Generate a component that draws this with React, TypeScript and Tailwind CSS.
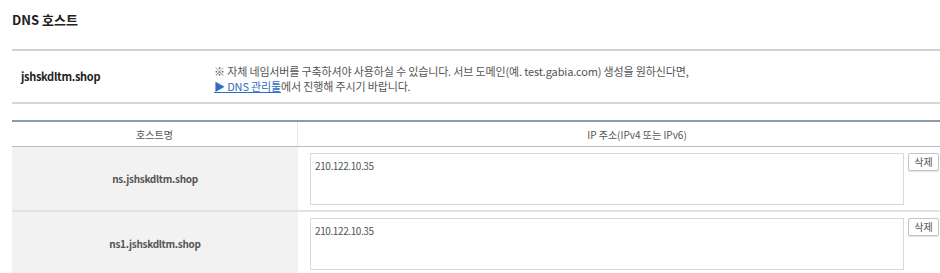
import React from "react";

const font = { fontFamily: '"Noto Sans CJK KR", "Noto Sans", sans-serif' };

function Row({ host, ip }: { host: string; ip: string }) {
  return (
    <div className="flex border-b-2 border-[#e3e3e3]">
      <div className="w-[286px] shrink-0 bg-[#f2f2f2] flex items-center justify-center text-[10px] tracking-[-0.3px] font-semibold text-[#555] h-[63px]">
        {host}
      </div>
      <div className="flex-1 flex items-start pl-[12px] pt-[6px] bg-white">
        <div className="w-[594px] h-[52px] border border-[#d9d9d9] bg-white px-[4px] pt-[4px] text-[10px] tracking-[-0.4px] leading-[16px] text-[#555]">
          {ip}
        </div>
        <button className="ml-[4px] w-[31px] h-[18px] border border-[#c4c4c4] rounded-[2px] bg-white text-[10px] leading-[14px] text-[#555] shadow-[0_1px_1px_rgba(0,0,0,0.12)]">
          삭제
        </button>
      </div>
    </div>
  );
}

export default function App() {
  return (
    <div className="w-[940px] h-[273px] overflow-hidden bg-white pl-[12px]" style={font}>
      <div className="h-[49px] pt-[11px] text-[13px] leading-[18px] font-bold text-[#222]">DNS 호스트</div>
      <div className="h-[2px] bg-[#ced2d7]" />
      <div className="flex items-center h-[51px]">
        <div className="w-[202px] pl-[9px] text-[11px] tracking-[-0.3px] font-bold text-[#222]">jshskdltm.shop</div>
        <div className="text-[11px] tracking-[-0.15px] leading-[15px] text-[#555] pt-[4px]">
          <div>※ 자체 네임서버를 구축하셔야 사용하실 수 있습니다. 서브 도메인(예. test.gabia.com) 생성을 원하신다면,</div>
          <div>
            <span className="text-[#2d6cc9] underline">▶ DNS 관리툴</span>에서 진행해 주시기 바랍니다.
          </div>
        </div>
      </div>
      <div className="h-[2px] bg-[#d3d7db]" />
      <div className="h-[16px]" />
      <div className="h-[2px] bg-[#8d9aa8]" />
      <div className="flex h-[25px] border-b border-[#b3bcc6] text-[10px] text-[#555]">
        <div className="w-[286px] shrink-0 flex items-center justify-center border-r border-[#e6e6e6]">호스트명</div>
        <div className="flex-1 flex items-center justify-center pl-[36px]">IP 주소(IPv4 또는 IPv6)</div>
      </div>
      <Row host="ns.jshskdltm.shop" ip="210.122.10.35" />
      <Row host="ns1.jshskdltm.shop" ip="210.122.10.35" />
    </div>
  );
}
